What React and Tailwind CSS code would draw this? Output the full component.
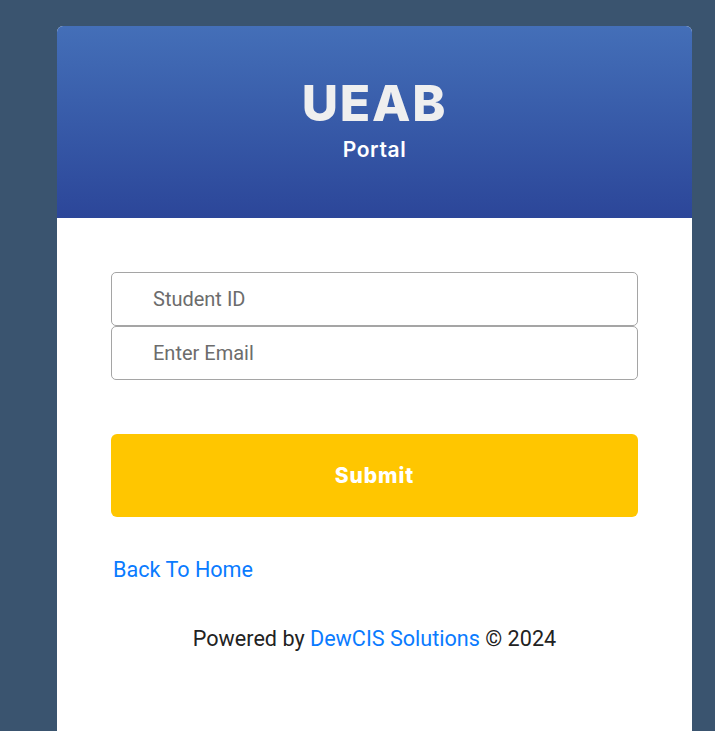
export default function App() {
  return (
    <div className="min-h-[731px] w-full bg-[#3a546f] pt-[26px] pl-[57px]" style={{ fontFamily: "Roboto, 'Liberation Sans', sans-serif" }}>
      <div className="w-[635px] rounded-t-[6px] bg-white overflow-hidden min-h-[705px]">
        <div className="h-[192px] bg-gradient-to-b from-[#446fb8] to-[#2c4699] flex flex-col items-center pt-[47px]">
          <div className="text-[50px] leading-[60px] font-extrabold text-[#efefef] tracking-[1.8px]" style={{ fontFamily: "Inter, 'Noto Sans', sans-serif" }}>UEAB</div>
          <div className="mt-[5px] text-[21px] leading-[24px] font-semibold text-white tracking-[0.6px]" style={{ fontFamily: "Inter, 'Noto Sans', sans-serif" }}>Portal</div>
        </div>
        <div className="px-[54px] pt-[54px] pb-[60px]">
          <div className="flex flex-col">
            <input placeholder="Student ID" className="h-[54px] w-full rounded-[5px] border border-[#a5a5a5] pl-[41px] text-[20px] text-[#333] placeholder:text-[#6c6c6c] outline-none" />
            <input placeholder="Enter Email" className="h-[54px] w-full rounded-[5px] border border-[#a5a5a5] pl-[41px] text-[20px] text-[#333] placeholder:text-[#6c6c6c] outline-none" />
          </div>
          <button className="mt-[54px] h-[83px] w-full rounded-[6px] bg-[#ffc600] text-[21px] font-extrabold text-white tracking-[0.9px]" style={{ fontFamily: "Inter, 'Noto Sans', sans-serif" }}>Submit</button>
          <div className="mt-[39px] pl-[2px] text-[21.6px] leading-[28px] text-[#0a7bff]">Back To Home</div>
          <div className="mt-[41px] text-center text-[21.6px] leading-[28px] text-[#222]">
            Powered by <span className="text-[#0a7bff]">DewCIS Solutions</span> © 2024
          </div>
        </div>
      </div>
    </div>
  );
}
